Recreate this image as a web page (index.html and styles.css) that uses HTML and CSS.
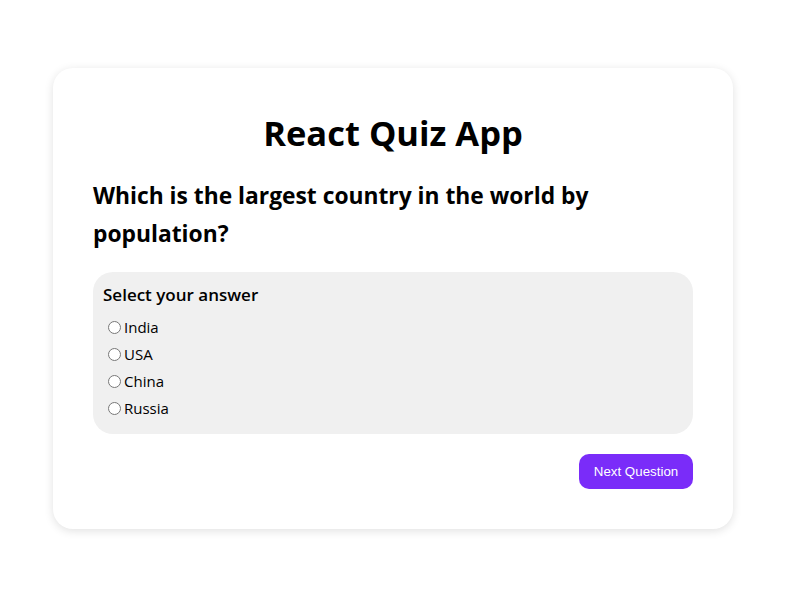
FILE: index.html
```html
<!DOCTYPE html>
<html lang="en">
<head>
<meta charset="utf-8">
<title>React Quiz App</title>
<link rel="stylesheet" href="styles.css">
</head>
<body>
<div class="page">
  <div class="card">
    <h1 class="title">React Quiz App</h1>
    <h2 class="question">Which is the largest country in the world by population?</h2>
    <div class="options">
      <h3 class="options-title">Select your answer</h3>
      <label class="option"><input type="radio" name="answer" value="India">India</label>
      <label class="option"><input type="radio" name="answer" value="USA">USA</label>
      <label class="option"><input type="radio" name="answer" value="China">China</label>
      <label class="option"><input type="radio" name="answer" value="Russia">Russia</label>
    </div>
    <div class="actions">
      <button class="next-btn" type="button">Next Question</button>
    </div>
  </div>
</div>
</body>
</html>
```
FILE: styles.css
```css
html, body {
  margin: 0;
  padding: 0;
}
body {
  font-family: "Open Sans", "Noto Sans", sans-serif;
  color: #000;
  background: #fff;
}
.page {
  min-height: 592px;
  box-sizing: border-box;
  padding-top: 4px;
  display: flex;
  align-items: center;
  justify-content: center;
}
.card {
  width: 600px;
  padding: 40px;
  background: #fff;
  border-radius: 20px;
  box-shadow: 0 2px 10px rgba(0, 0, 0, 0.12);
  display: flex;
  flex-direction: column;
  margin-right: 4px;
}
.title {
  margin: 0;
  font-size: 34.5px;
  line-height: 50px;
  text-align: center;
  font-weight: 700;
}
.question {
  margin: 19px 0 0;
  font-size: 22.8px;
  line-height: 38px;
  font-weight: 700;
}
.options {
  margin-top: 19px;
  background: #f0f0f0;
  border-radius: 20px;
  padding: 10px 10px 12px;
  display: flex;
  flex-direction: column;
}
.options-title {
  margin: 0 0 6px;
  font-size: 17px;
  line-height: 26px;
  font-weight: 600;
}
.option {
  display: flex;
  align-items: center;
  font-size: 15px;
  line-height: 27px;
}
.option input {
  margin: 0 3px 0 5px;
  width: 13px;
  height: 13px;
}
.actions {
  display: flex;
  justify-content: flex-end;
  margin-top: 20px;
}
.next-btn {
  font-family: "Liberation Sans", Arial, sans-serif;
  font-size: 13.33px;
  color: #fff;
  background: #7a2cf9;
  border: none;
  border-radius: 10px;
  width: 114px;
  height: 35px;
  padding: 0;
}
```
